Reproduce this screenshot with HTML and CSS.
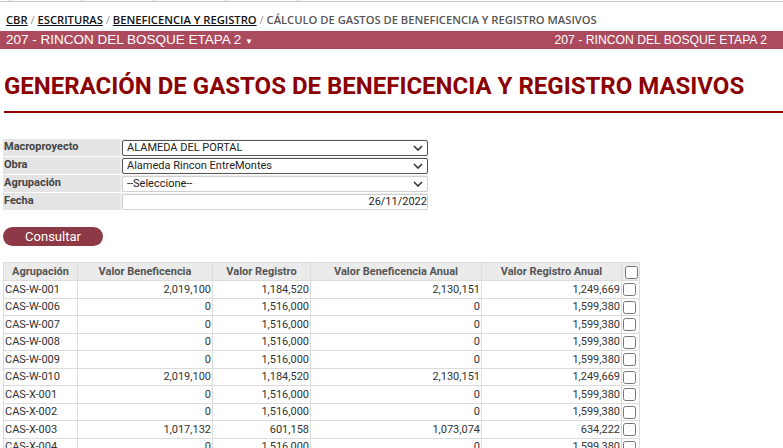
FILE: index.html
```html
<!DOCTYPE html>
<html lang="es">
<head>
    <meta charset="UTF-8">
    <title>Generación de gastos de beneficencia y registro masivos</title>
    <link rel="stylesheet" href="styles.css">
</head>
<body>
    <div class="top-menu">
        <span></span><span></span><span></span><span></span><span></span>
    </div>

    <div class="breadcrumb">
        <a href="#">CBR</a> <span class="sep">/</span>
        <a href="#">ESCRITURAS</a> <span class="sep">/</span>
        <a href="#">BENEFICENCIA Y REGISTRO</a> <span class="sep">/</span>
        <span class="current">CÁLCULO DE GASTOS DE BENEFICENCIA Y REGISTRO MASIVOS</span>
    </div>

    <div class="project-bar">
        <span>207 - RINCON DEL BOSQUE ETAPA 2 <small>&#9660;</small></span>
        <span class="project-right">207 - RINCON DEL BOSQUE ETAPA 2</span>
    </div>

    <h1 class="page-title">GENERACIÓN DE GASTOS DE BENEFICENCIA Y REGISTRO MASIVOS</h1>

    <table class="filters">
        <tr>
            <th>Macroproyecto</th>
            <td><div class="select dark">ALAMEDA DEL PORTAL<svg width="10" height="6" viewBox="0 0 10 6"><path d="M1 1l4 4 4-4" fill="none" stroke="#333" stroke-width="1.6"/></svg></div></td>
        </tr>
        <tr>
            <th>Obra</th>
            <td><div class="select dark">Alameda Rincon EntreMontes<svg width="10" height="6" viewBox="0 0 10 6"><path d="M1 1l4 4 4-4" fill="none" stroke="#333" stroke-width="1.6"/></svg></div></td>
        </tr>
        <tr>
            <th>Agrupación</th>
            <td><div class="select">--Seleccione--<svg width="10" height="6" viewBox="0 0 10 6"><path d="M1 1l4 4 4-4" fill="none" stroke="#333" stroke-width="1.6"/></svg></div></td>
        </tr>
        <tr>
            <th>Fecha</th>
            <td><div class="select date">26/11/2022</div></td>
        </tr>
    </table>

    <button class="btn-consultar">Consultar</button>

    <table class="results">
        <thead>
            <tr>
                <th class="c1">Agrupación</th>
                <th class="c2">Valor Beneficencia</th>
                <th class="c3">Valor Registro</th>
                <th class="c4">Valor Beneficencia Anual</th>
                <th class="c5">Valor Registro Anual</th>
                <th class="c6"><input type="checkbox"></th>
            </tr>
        </thead>
        <tbody id="rows"></tbody>
    </table>

    <script>
        const data = [
            ['CAS-W-001', '2,019,100', '1,184,520', '2,130,151', '1,249,669'],
            ['CAS-W-006', '0', '1,516,000', '0', '1,599,380'],
            ['CAS-W-007', '0', '1,516,000', '0', '1,599,380'],
            ['CAS-W-008', '0', '1,516,000', '0', '1,599,380'],
            ['CAS-W-009', '0', '1,516,000', '0', '1,599,380'],
            ['CAS-W-010', '2,019,100', '1,184,520', '2,130,151', '1,249,669'],
            ['CAS-X-001', '0', '1,516,000', '0', '1,599,380'],
            ['CAS-X-002', '0', '1,516,000', '0', '1,599,380'],
            ['CAS-X-003', '1,017,132', '601,158', '1,073,074', '634,222'],
            ['CAS-X-004', '0', '1,516,000', '0', '1,599,380']
        ];
        const tbody = document.getElementById('rows');
        data.forEach(function(r) {
            const tr = document.createElement('tr');
            tr.innerHTML = '<td>' + r[0] + '</td>' +
                '<td class="num">' + r[1] + '</td>' +
                '<td class="num">' + r[2] + '</td>' +
                '<td class="num">' + r[3] + '</td>' +
                '<td class="num">' + r[4] + '</td>' +
                '<td class="chk"><input type="checkbox"></td>';
            tbody.appendChild(tr);
        });
    </script>
</body>
</html>
```

FILE: styles.css
```css
body {
    margin: 0;
    padding: 0 0 0 3px;
    font-family: Roboto, Arial, sans-serif;
    font-size: 11px;
    color: #333;
    background-color: white;
    overflow: hidden;
}
.top-menu {
    display: flex;
    height: 1px;
    margin-left: -3px;
    padding-left: 9px;
    border-bottom: 1px solid #c8c8c8;
}
.top-menu span {
    width: 71px;
    border-left: 1px solid #bbb;
}
.breadcrumb {
    font-family: "Open Sans", Arial, sans-serif;
    font-weight: 600;
    font-size: 11.2px;
    margin: 10px 0 0 3px;
    height: 19px;
    color: #555;
}
.breadcrumb a {
    color: #111;
    text-decoration: underline;
}
.breadcrumb .sep {
    color: #999;
    font-weight: 400;
}
.project-bar {
    display: flex;
    justify-content: space-between;
    margin-left: -3px;
    height: 18px;
    line-height: 18px;
    padding: 0 16px 0 6px;
    background-color: #ad4b5e;
    color: white;
    font-family: "Liberation Sans", Arial, sans-serif;
    font-size: 13.5px;
}
.project-bar small {
    font-size: 8px;
}
.project-bar .project-right {
    font-size: 12.2px;
}
.page-title {
    margin: 23px 0 0 1px;
    padding-bottom: 11px;
    border-bottom: 2px solid #8b0000;
    color: #8b0000;
    font-family: Roboto, Arial, sans-serif;
    font-size: 24px;
    font-weight: 700;
    line-height: 28px;
}
.filters {
    margin-top: 25px;
    border-collapse: separate;
    border-spacing: 0 1px;
    width: 425px;
}
.filters th {
    width: 116px;
    height: 16px;
    padding: 1px 0 0 1px;
    text-align: left;
    background-color: #e4e4e4;
    color: #444;
    font-weight: 700;
    vertical-align: top;
    line-height: 14px;
}
.filters td {
    padding: 0 0 0 2px;
    background-color: #eeeeee;
    vertical-align: bottom;
}
.select {
    display: flex;
    justify-content: space-between;
    align-items: center;
    height: 14px;
    padding: 0 4px 0 4px;
    border: 1px solid #d0d0d0;
    border-radius: 2px;
    background-color: white;
    color: #222;
    line-height: 14px;
}
.select.dark {
    border-color: #555;
}
.select.date {
    justify-content: flex-end;
    padding-right: 0;
}
.btn-consultar {
    display: block;
    margin-top: 16px;
    width: 100px;
    height: 19px;
    padding: 0;
    border: none;
    border-radius: 10px;
    background-color: #8d3a46;
    color: white;
    font-family: Roboto, Arial, sans-serif;
    font-size: 13px;
    cursor: pointer;
}
.results {
    margin-top: 16px;
    border-collapse: collapse;
    table-layout: fixed;
    width: 637px;
}
.results th {
    height: 17px;
    padding: 0;
    background-color: #ebebeb;
    border: 1px solid #dcdcdc;
    color: #555;
    font-weight: 700;
    text-align: center;
}
.results td {
    height: 15.5px;
    padding: 1px 1px 0;
    border: 1px solid #dcdcdc;
    white-space: nowrap;
    line-height: 14px;
}
.results td.num {
    text-align: right;
}
.results .c1 { width: 73px; }
.results .c2 { width: 134px; }
.results .c3 { width: 97px; }
.results .c4 { width: 170px; }
.results .c5 { width: 139px; }
.results .c6 { width: 17px; }
.results input[type="checkbox"] {
    margin: 1px 0 0 1px;
    width: 13px;
    height: 13px;
    vertical-align: middle;
}
.results .chk {
    padding: 0;
}
```
